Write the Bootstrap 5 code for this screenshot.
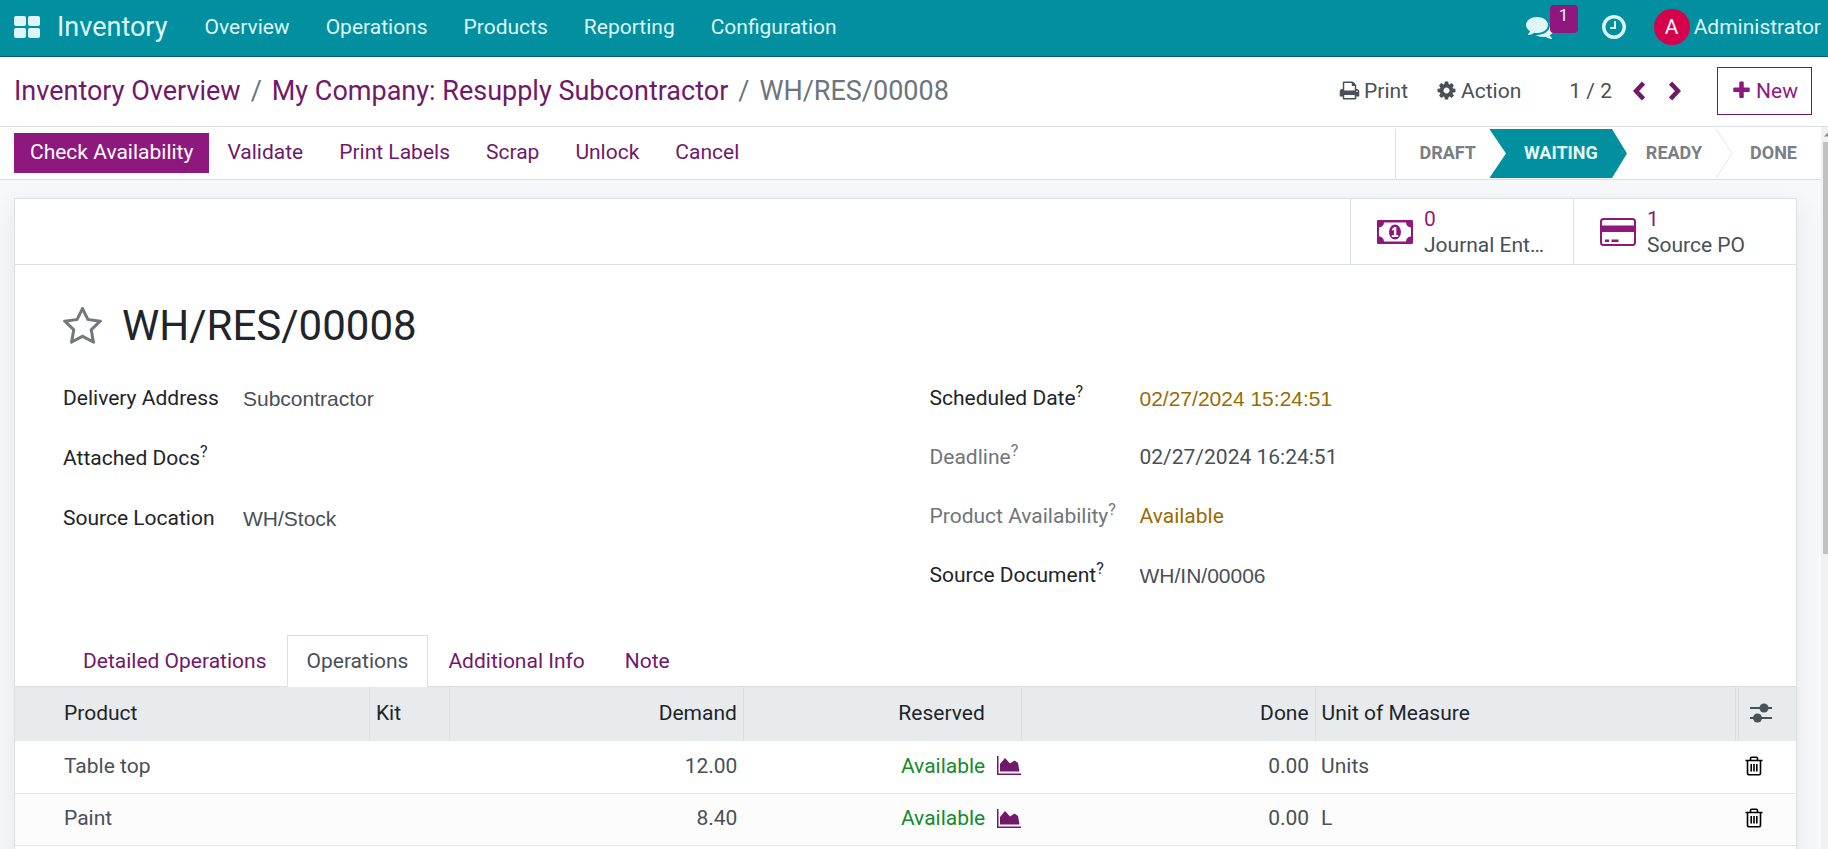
<!DOCTYPE html>
<html lang="en">
<head>
<meta charset="utf-8">
<meta name="viewport" content="width=device-width, initial-scale=1">
<title>WH/RES/00008 - Inventory</title>
<link href="https://cdn.jsdelivr.net/npm/bootstrap@5.3.0/dist/css/bootstrap.min.css" rel="stylesheet">
<style>
  :root { --teal:#0290a0; --plum:#8f187f; --plum-dark:#71186b; --ink:#495057; --line:#dbdfe2; }
  body { font-family:Roboto, sans-serif; font-size:21px; line-height:30px; color:var(--ink); background:#fff; }
  a { text-decoration:none; color:var(--plum-dark); }
  svg { display:block; flex:none; }
  .btn { --bs-btn-font-size:21px; --bs-btn-line-height:30px; --bs-btn-border-radius:0; font-family:inherit; }

  .topbar { height:57px; background:var(--teal); border-bottom:1px solid #0b5f69; padding:0 7px 2px 14px; color:#dff6f8; }
  .topbar a, .topbar button { color:#dff6f8; }
  .app-name { font-size:27px; margin:0 37px 0 17px; }
  .app-menu { gap:36px; }
  .plain-btn { border:0; background:none; padding:0; color:inherit; }
  .msg-count { position:absolute; left:24px; top:-8px; width:28px; height:28px; border-radius:4px; background:var(--plum); font-size:17px; line-height:20px; }
  .clock-btn { margin-left:46px; }
  .user-btn { margin-left:26px; }
  .avatar { width:36px; height:36px; border-radius:50%; background:#d6004d; color:#fff; }

  .control-panel { height:70px; padding:0 16px 2px 14px; border-bottom:1px solid var(--line); }
  .crumbs { --bs-breadcrumb-divider-color:#6c757d; --bs-breadcrumb-item-padding-x:10px; --bs-breadcrumb-item-active-color:#6c757d; font-size:27px; line-height:36px; }
  .pager { gap:24px; margin:0 36px 0 21px; }
  .btn-new { --bs-btn-color:var(--plum); --bs-btn-border-color:var(--plum-dark); height:48px; width:95px; padding:0; }

  .statusbar { height:53px; padding-left:14px; border-bottom:1px solid var(--line); background:#fff; }
  .btn-main { --bs-btn-color:#fff; --bs-btn-bg:var(--plum); height:40px; padding:0 16px 2px; border:0; }
  .btn-flat { --bs-btn-color:var(--plum-dark); height:40px; padding:0 18px 2px; border:0; }
  .steps { height:49px; border-left:1px solid var(--line); }
  .step { position:relative; border:0; background:none; padding:0 14px 0 34px; font-size:18px; font-weight:700; color:#797f84; }
  .step:first-child { padding-left:23px; }
  .step:last-child { padding-right:24px; }
  .step.current { background:var(--teal); color:#e4f7f9; }
  .step svg { position:absolute; left:100%; top:0; z-index:1; }

  .workspace { background:#f7f8fa; }
  .sheet-wrap { padding:18px 24px 0 14px; }
  .sheet { background:#fff; border:1px solid var(--line); border-bottom:0; box-shadow:0 8px 24px rgba(60,80,100,.10); }
  .stat-row { height:66px; border-bottom:1px solid var(--line); }
  .stat-btn { width:223px; border:0; border-left:1px solid var(--line); background:#fff; padding:0 24px 0 26px; gap:11px; line-height:26px; color:var(--ink); }
  .stat-btn .num { color:var(--plum); }
  .sheet-body { padding:36px 48px 0; }
  .doc-title { font-size:42px; line-height:50px; font-weight:400; color:#212529; }
  .fields { column-gap:48px; margin-top:32px; display:grid; grid-template-columns:1fr 1fr; }
  .field-row { display:flex; align-items:flex-start; }
  .left-group .field-row { height:60px; }
  .right-group .field-row { height:59px; }
  .left-group .lbl { width:180px; }
  .right-group .lbl { width:210px; }
  .lbl { flex:none; color:#212529; }
  .lbl.muted { color:#70757a; }
  .lbl sup { font-size:16px; top:-8px; line-height:0; vertical-align:baseline; }
  .field-row input { flex:1; min-width:0; margin-top:1px; border:0; padding:0; outline:0; background:none; color:var(--ink); font-family:"Liberation Sans", sans-serif; font-size:21px; line-height:30px; }
  .field-row .amber { color:#9a6b01; }
  .tabs { --bs-nav-tabs-border-color:var(--line); --bs-nav-tabs-border-radius:0; --bs-nav-link-color:var(--plum-dark); --bs-nav-tabs-link-active-color:var(--ink); --bs-nav-tabs-link-active-border-color:var(--line) var(--line) #fff; --bs-nav-link-padding-x:19px; --bs-nav-link-padding-y:10px; margin-top:16px; padding-left:48px; }

  .lines { table-layout:fixed; width:100%; color:var(--ink); margin:0; }
  .lines th { height:54px; background:#e7ebed; color:#212529; font-weight:400; padding:0 6px 2px; border-right:1px solid #d9dee1; }
  .lines th:last-child { border-right:0; }
  .lines td { height:52px; padding:0 6px 2px; border-bottom:1px solid #e5e7e9; }
  .lines tbody tr:nth-child(even) { background:#fcfcfc; }
  .lines tr > :first-child { padding-left:49px; }
  .lines .with-icon { padding-right:36px; }
  .lines .forecast { padding:0 0 2px; }
  .lines tr > .opt { border-left:4px double #d9dee1; padding-left:11px; }
  .lines tr > .del { padding-left:8px; }
  .ok { color:#148a2c; }

  .scroller { width:7px; background:#f1f1f1; padding:0 0 0 2px; }
  .scroller .thumb { height:57%; background:#c1c1c1; }
</style>
</head>
<body class="vh-100 d-flex flex-column overflow-hidden">

<nav class="topbar d-flex align-items-center flex-shrink-0">
  <button class="plain-btn" aria-label="Apps"><svg width="26" height="23" viewBox="0 0 26 23" fill="currentColor"><rect width="12" height="10" rx="2"/><rect x="14" width="12" height="10" rx="2"/><rect y="12" width="12" height="10" rx="2"/><rect x="14" y="12" width="12" height="10" rx="2"/></svg></button>
  <a href="#" class="app-name">Inventory</a>
  <div class="app-menu d-flex">
    <a href="#">Overview</a><a href="#">Operations</a><a href="#">Products</a><a href="#">Reporting</a><a href="#">Configuration</a>
  </div>
  <div class="ms-auto d-flex align-items-center">
    <button class="plain-btn position-relative" aria-label="Messages">
      <svg width="28" height="28" viewBox="0 0 1792 1792" fill="currentColor"><path d="M1408 768q0 139-94 257t-256.5 186.5-353.5 68.5q-86 0-176-16-124 88-278 128-36 9-86 16h-3q-11 0-20.5-8t-11.5-21q-1-3-1-6.500t.5-6.500 2-6l2.500-5 3.500-5.500 4-5 4.500-5 4-4.500q5-6 23-25t26-29.500 22.500-29 25-38.500 20.500-44q-124-72-195-177t-71-224q0-139 94-257t256.500-186.500 353.500-68.500 353.500 68.500 256.500 186.500 94 257zm384 256q0 120-71 224.500t-195 176.500q10 24 20.500 44t25 38.500 22.500 29 26 29.500 23 25q1 1 4 4.500t4.500 5 4 5 3.500 5.500l2.500 5 2 6 .5 6.500-1 6.500q-3 14-13 22t-22 7q-50-7-86-16-154-40-278-128-90 16-176 16-271 0-472-132 58 4 88 4 161 0 309-45t264-129q125-92 192-212t67-254q0-77-23-152 129 71 204 178t75 230z"/></svg>
      <span class="msg-count">1</span>
    </button>
    <button class="plain-btn clock-btn" aria-label="Activities">
      <svg width="28" height="28" viewBox="0 0 1792 1792" fill="currentColor"><path d="M1024 544v448q0 14-9 23t-23 9h-320q-14 0-23-9t-9-23v-64q0-14 9-23t23-9h224v-352q0-14 9-23t23-9h64q14 0 23 9t9 23zm416 352q0-148-73-273t-198-198-273-73-273 73-198 198-73 273 73 273 198 198 273 73 273-73 198-198 73-273zm224 0q0 209-103 385.500t-279.500 279.500-385.500 103-385.500-103-279.500-279.500-103-385.500 103-385.500 279.500-279.500 385.500-103 385.500 103 279.500 279.500 103 385.500z"/></svg>
    </button>
    <button class="plain-btn user-btn d-flex align-items-center"><span class="avatar me-1 d-flex align-items-center justify-content-center">A</span>Administrator</button>
  </div>
</nav>

<header class="control-panel d-flex align-items-center flex-shrink-0">
  <ol class="breadcrumb crumbs mb-0">
    <li class="breadcrumb-item"><a href="#">Inventory Overview</a></li>
    <li class="breadcrumb-item"><a href="#">My Company: Resupply Subcontractor</a></li>
    <li class="breadcrumb-item active">WH/RES/00008</li>
  </ol>
  <div class="ms-auto d-flex align-items-center">
    <button class="plain-btn d-flex align-items-center gap-1"><svg width="21" height="21" viewBox="0 0 1792 1792" fill="currentColor"><path d="M448 1536h896v-256h-896v256zm0-640h896v-384h-160q-40 0-68-28t-28-68v-160h-640v640zm1152 64q0-26-19-45t-45-19-45 19-19 45 19 45 45 19 45-19 19-45zm128 0v416q0 13-9.500 22.500t-22.500 9.500h-224v160q0 40-28 68t-68 28h-960q-40 0-68-28t-28-68v-160h-224q-13 0-22.500-9.500t-9.500-22.500v-416q0-79 56.500-135.500t135.500-56.500h64v-544q0-40 28-68t68-28h672q40 0 88 20t76 48l152 152q28 28 48 76t20 88v256h64q79 0 135.500 56.500t56.500 135.500z"/></svg>Print</button>
    <button class="plain-btn d-flex align-items-center gap-1 ms-4 ps-1"><svg width="21" height="21" viewBox="0 0 1792 1792" fill="currentColor"><path d="M1152 896q0-106-75-181t-181-75-181 75-75 181 75 181 181 75 181-75 75-181zm512-109v222q0 12-8 23t-20 13l-185 28q-19 54-39 91 35 50 107 138 10 12 10 25t-9 23q-27 37-99 108t-94 71q-12 0-26-9l-138-108q-44 23-91 38-16 136-29 186-7 28-36 28h-222q-14 0-24.500-8.500t-11.500-21.500l-28-184q-49-16-90-37l-141 107q-10 9-25 9-14 0-25-11-126-114-165-168-7-10-7-23 0-12 8-23 15-21 51-66.500t54-70.500q-27-50-41-99l-183-27q-13-2-21-12.500t-8-23.500v-222q0-12 8-23t19-13l186-28q14-46 39-92-40-57-107-138-10-12-10-24 0-10 9-23 26-36 98.500-107.500t94.500-71.500q13 0 26 10l138 107q44-23 91-38 16-136 29-186 7-28 36-28h222q14 0 24.500 8.500t11.500 21.500l28 184q49 16 90 37l142-107q9-9 24-9 13 0 25 10 129 119 165 170 7 8 7 22 0 12-8 23-15 21-51 66.500t-54 70.500q26 50 41 98l183 28q13 2 21 12.500t8 23.500z"/></svg>Action</button>
    <span class="ms-5">1 / 2</span>
    <div class="pager d-flex">
    <button class="plain-btn" aria-label="Previous"><svg width="12" height="20" viewBox="0 0 12 20" fill="none" stroke="#71186b" stroke-width="4.500"><path d="M10.500 2 3 10l7.500 8"/></svg></button>
    <button class="plain-btn" aria-label="Next"><svg width="12" height="20" viewBox="0 0 12 20" fill="none" stroke="#71186b" stroke-width="4.500"><path d="M1.500 2 9 10l-7.500 8"/></svg></button>
    </div>
    <button class="btn btn-new d-flex align-items-center justify-content-center gap-1"><svg width="21" height="21" viewBox="0 0 1792 1792" fill="currentColor"><path d="M1600 736v192q0 40-28 68t-68 28h-416v416q0 40-28 68t-68 28h-192q-40 0-68-28t-28-68v-416h-416q-40 0-68-28t-28-68v-192q0-40 28-68t68-28h416v-416q0-40 28-68t68-28h192q40 0 68 28t28 68v416h416q40 0 68 28t28 68z"/></svg>New</button>
  </div>
</header>

<div class="d-flex flex-grow-1 overflow-hidden">
  <main class="workspace flex-grow-1 overflow-hidden">
    <div class="statusbar d-flex align-items-center">
      <button class="btn btn-main">Check Availability</button>
      <button class="btn btn-flat">Validate</button>
      <button class="btn btn-flat">Print Labels</button>
      <button class="btn btn-flat">Scrap</button>
      <button class="btn btn-flat">Unlock</button>
      <button class="btn btn-flat">Cancel</button>
      <div class="steps d-flex ms-auto">
        <button class="step">DRAFT<svg width="16" height="49" viewBox="0 0 16 49"><path d="M0 1 16 24.500 0 48z" fill="#fff"/></svg></button>
        <button class="step current">WAITING<svg width="16" height="49" viewBox="0 0 16 49"><path d="M0 0 15 24.500 0 49z" fill="#0290a0"/></svg></button>
        <button class="step">READY<svg width="17" height="49" viewBox="0 0 17 49"><path d="M0 0 16 24.500 0 49" fill="none" stroke="#e2e5e8"/></svg></button>
        <button class="step">DONE</button>
      </div>
    </div>

    <div class="sheet-wrap">
      <section class="sheet">
        <div class="stat-row d-flex justify-content-end">
          <button class="stat-btn d-flex align-items-center text-start">
            <svg width="36" height="24" viewBox="0 0 36 24"><rect width="36" height="24" rx="1" fill="#8f187f"/><path d="M7 2.500h22a5 5 0 0 0 5 5v9a5 5 0 0 0-5 5H7a5 5 0 0 0-5-5v-9a5 5 0 0 0 5-5z" fill="#fff"/><ellipse cx="18" cy="12" rx="6" ry="7.500" fill="#8f187f"/><path d="M14.800 9.200 17.300 7h2v8.200h2v1.800h-6.500v-1.800h2.200V9.800l-1.200 1z" fill="#fff"/></svg>
            <span class="text-truncate"><span class="num d-block">0</span>Journal Ent…</span>
          </button>
          <button class="stat-btn d-flex align-items-center text-start">
            <svg width="36" height="28" viewBox="0 0 36 28"><rect x="1" y="1" width="34" height="26" rx="2.500" fill="#fff" stroke="#8f187f" stroke-width="2"/><path d="M1 7.500h34v6.500H1zM5 21.500h4v2.500H5zM11.500 21.500h7v2.500h-7z" fill="#8f187f"/></svg>
            <span><span class="num d-block">1</span>Source PO</span>
          </button>
        </div>

        <div class="sheet-body">
          <div class="d-flex align-items-center">
            <button class="plain-btn" aria-label="Priority"><svg width="39" height="38" viewBox="64 64 1664 1600" fill="#73787d"><path d="M1201 1004l306-297-422-62-189-382-189 382-422 62 306 297-73 421 378-199 377 199zm527-357q0 22-26 48l-363 354 86 500q1 7 1 20 0 50-41 50-19 0-40-12l-449-236-449 236q-22 12-40 12-21 0-31.500-14.500t-10.500-35.500q0-6 2-20l86-500-364-354q-25-27-25-48 0-37 56-46l502-73 225-455q19-41 49-41t49 41l225 455 502 73q56 9 56 46z"/></svg></button>
            <h1 class="doc-title mb-0 ms-3 ps-1">WH/RES/00008</h1>
          </div>

          <div class="fields">
            <div class="left-group">
              <div class="field-row"><label class="lbl" for="addr">Delivery Address</label><input id="addr" value="Subcontractor"></div>
              <div class="field-row"><label class="lbl" for="docs">Attached Docs<sup>?</sup></label><input id="docs"></div>
              <div class="field-row"><label class="lbl" for="loc">Source Location</label><input id="loc" value="WH/Stock"></div>
            </div>
            <div class="right-group">
              <div class="field-row"><label class="lbl" for="sched">Scheduled Date<sup>?</sup></label><input id="sched" class="amber" value="02/27/2024 15:24:51"></div>
              <div class="field-row"><span class="lbl muted">Deadline<sup>?</sup></span><span>02/27/2024 16:24:51</span></div>
              <div class="field-row"><span class="lbl muted">Product Availability<sup>?</sup></span><span class="amber">Available</span></div>
              <div class="field-row"><label class="lbl" for="src">Source Document<sup>?</sup></label><input id="src" value="WH/IN/00006"></div>
            </div>
          </div>
        </div>

        <ul class="nav nav-tabs tabs">
          <li class="nav-item"><a class="nav-link" href="#">Detailed Operations</a></li>
          <li class="nav-item"><a class="nav-link active" href="#">Operations</a></li>
          <li class="nav-item"><a class="nav-link" href="#">Additional Info</a></li>
          <li class="nav-item"><a class="nav-link" href="#">Note</a></li>
        </ul>

        <table class="lines">
          <colgroup><col style="width:19.9%"><col style="width:4.5%"><col style="width:16.5%"><col style="width:15.6%"><col style="width:16.5%"><col><col style="width:3.3%"></colgroup>
          <thead>
            <tr><th>Product</th><th>Kit</th><th class="text-end">Demand</th><th class="text-end with-icon">Reserved</th><th class="text-end">Done</th><th>Unit of Measure</th>
            <th class="opt"><button class="plain-btn d-block" aria-label="Optional columns"><svg width="22" height="20" viewBox="0 0 22 20" fill="#495057"><path d="M0 4h22v2H0zM0 14h22v2H0z"/><circle cx="14" cy="5" r="4.500"/><circle cx="7.500" cy="15" r="4.500"/></svg></button></th></tr>
          </thead>
          <tbody>
            <tr><td>Table top</td><td></td><td class="text-end">12.00</td>
              <td class="ok forecast"><div class="d-flex align-items-center justify-content-end gap-2">Available<button class="plain-btn ps-1" aria-label="Forecast"><svg width="24" height="19" viewBox="0 0 24 19" fill="#71186b"><path d="M0 0h1.500v17.500H24V19H0zM3 15.500V8l5-6 5 5.500 4.500-3L21 7l1.500 8.500z"/></svg></button></div></td>
              <td class="text-end">0.00</td><td>Units</td>
              <td class="del"><button class="plain-btn d-block" aria-label="Delete"><svg width="18" height="20" viewBox="0 0 18 20" fill="none" stroke="#000" stroke-width="1.600"><path d="M.5 4.500h17M5.500 4.500V2.500q0-1.200 1.200-1.200h4.600q1.200 0 1.200 1.200v2M2.500 4.500v12.500q0 1.800 1.800 1.800h9.400q1.800 0 1.800-1.800V4.500M6.200 8v7.500M9 8v7.500M11.800 8v7.500"/></svg></button></td></tr>
            <tr><td>Paint</td><td></td><td class="text-end">8.40</td>
              <td class="ok forecast"><div class="d-flex align-items-center justify-content-end gap-2">Available<button class="plain-btn ps-1" aria-label="Forecast"><svg width="24" height="19" viewBox="0 0 24 19" fill="#71186b"><path d="M0 0h1.500v17.500H24V19H0zM3 15.500V8l5-6 5 5.500 4.500-3L21 7l1.500 8.500z"/></svg></button></div></td>
              <td class="text-end">0.00</td><td>L</td>
              <td class="del"><button class="plain-btn d-block" aria-label="Delete"><svg width="18" height="20" viewBox="0 0 18 20" fill="none" stroke="#000" stroke-width="1.600"><path d="M.5 4.500h17M5.500 4.500V2.500q0-1.200 1.200-1.200h4.600q1.200 0 1.200 1.200v2M2.500 4.500v12.500q0 1.800 1.800 1.800h9.400q1.800 0 1.800-1.800V4.500M6.200 8v7.500M9 8v7.500M11.800 8v7.500"/></svg></button></td></tr>
            <tr><td colspan="7"></td></tr>
          </tbody>
        </table>
      </section>
    </div>
  </main>
  <div class="scroller flex-shrink-0" aria-hidden="true">
    <svg width="5" height="15" viewBox="0 0 5 15"><path d="M1 9.500 5 5.500v4z" fill="#8a8a8a"/></svg>
    <div class="thumb"></div>
  </div>
</div>

<script src="https://cdn.jsdelivr.net/npm/bootstrap@5.3.0/dist/js/bootstrap.bundle.min.js"></script>
</body>
</html>
